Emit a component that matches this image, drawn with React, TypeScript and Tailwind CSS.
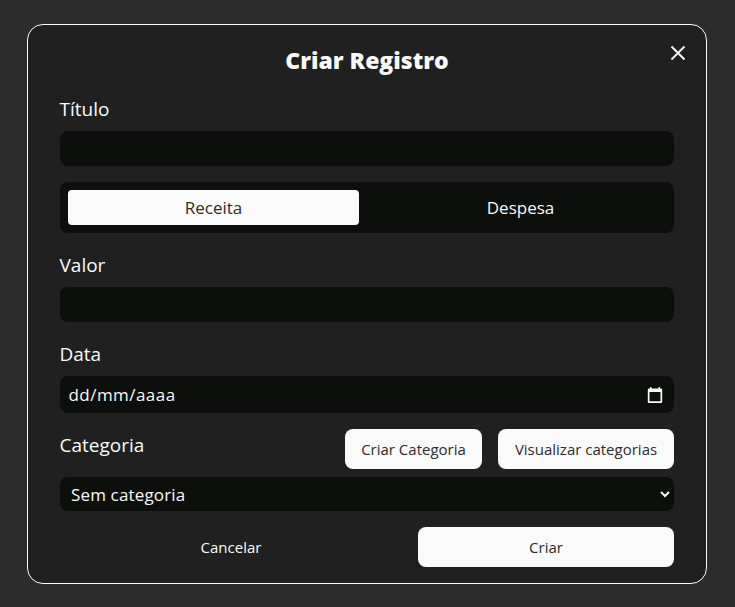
import type { ReactNode } from 'react';

function Label({ children }: { children: ReactNode }) {
  return <div className="-ml-[0.5px] h-7 text-[19px] leading-7 text-[#fafafa]">{children}</div>;
}

export default function App() {
  return (
    <div className="h-[607px] w-[735px] bg-[#2c2c2c] pt-6 pl-[27px] font-['Open_Sans','Noto_Sans',sans-serif] text-[#fafafa]">
      <div className="flex h-[560px] w-[680px] flex-col rounded-2xl border border-[#fafafa] bg-[#202020] px-8">
        <div className="relative flex h-[70px] shrink-0 items-center justify-center">
          <h2 className="text-[23px] leading-8 font-extrabold">Criar Registro</h2>
          <button className="absolute top-[20px] -right-3 h-4 w-4" aria-label="Fechar">
            <svg viewBox="0 0 16 16" className="h-4 w-4" fill="none" stroke="#fafafa" strokeWidth="1.9">
              <path d="M1.5 1.5 14.5 14.5M14.5 1.5 1.5 14.5" />
            </svg>
          </button>
        </div>
        <Label>Título</Label>
        <div className="mt-2 h-[35px] shrink-0 rounded-lg bg-[#0d0f0c]" />
        <div className="mt-4 flex h-[51px] shrink-0 gap-4 rounded-lg bg-[#0d0f0c] p-2 text-[17px]">
          <button className="w-[291px] rounded bg-[#fafafa] text-[#2c2c2c]">Receita</button>
          <button className="w-[291px]">Despesa</button>
        </div>
        <div className="mt-[18px]">
          <Label>Valor</Label>
        </div>
        <div className="mt-2 h-[35px] shrink-0 rounded-lg bg-[#0d0f0c]" />
        <div className="mt-[18px]">
          <Label>Data</Label>
        </div>
        <div className="mt-2 flex h-[37px] shrink-0 items-center justify-between rounded-lg bg-[#0d0f0c] pr-[11px] pl-[8.5px] text-[17px]">
          <span className="tracking-[0.45px]">dd/mm/aaaa</span>
          <svg viewBox="0 0 16 18" className="h-[18px] w-4" fill="#fafafa">
            <path fillRule="evenodd" d="M3 1h1.5v1.5h7V1H13v1.5h1A1.2 1.2 0 0 1 15.2 3.7v12A1.2 1.2 0 0 1 14 17H2A1.2 1.2 0 0 1 .8 15.7v-12A1.2 1.2 0 0 1 2 2.500h1zM2.500 6v9.300h11V6z" />
          </svg>
        </div>
        <div className="mt-4 flex h-10 shrink-0 justify-between">
          <div className="pt-[2px]">
            <Label>Categoria</Label>
          </div>
          <div className="flex gap-4 text-[15px] text-[#2c2c2c]">
            <button className="w-[137px] rounded-lg bg-[#fafafa] whitespace-nowrap">Criar Categoria</button>
            <button className="w-[176px] rounded-lg bg-[#fafafa] whitespace-nowrap">Visualizar categorias</button>
          </div>
        </div>
        <div className="mt-2 flex h-[34px] shrink-0 items-center justify-between rounded-lg bg-[#0d0f0c] pr-1 pl-[11px] text-[17px]">
          <span className="pt-px tracking-[0.15px]">Sem categoria</span>
          <svg viewBox="0 0 10 8" className="h-2 w-[10px]" fill="none" stroke="#fafafa" strokeWidth="2">
            <path d="M1 2 5 6 9 2" />
          </svg>
        </div>
        <div className="mt-4 flex h-10 shrink-0 gap-4 text-[15px]">
          <button className="w-[342px]">Cancelar</button>
          <button className="w-[256px] rounded-lg bg-[#fafafa] text-[#2c2c2c]">Criar</button>
        </div>
      </div>
    </div>
  );
}
